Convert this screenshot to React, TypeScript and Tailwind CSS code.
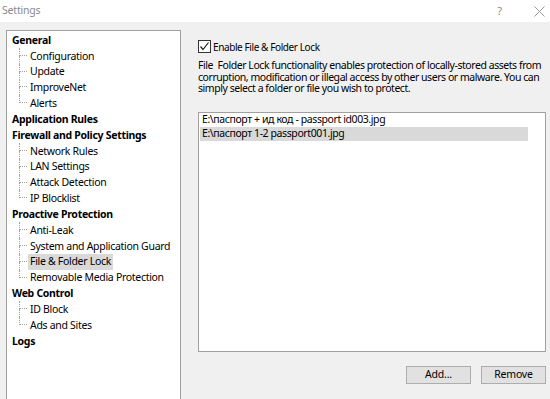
import React from "react";

type Item = { label: string; children?: string[] };

const tree: Item[] = [
  { label: "General", children: ["Configuration", "Update", "ImproveNet", "Alerts"] },
  { label: "Application Rules" },
  { label: "Firewall and Policy Settings", children: ["Network Rules", "LAN Settings", "Attack Detection", "IP Blocklist"] },
  { label: "Proactive Protection", children: ["Anti-Leak", "System and Application Guard", "File & Folder Lock", "Removable Media Protection"] },
  { label: "Web Control", children: ["ID Block", "Ads and Sites"] },
  { label: "Logs" },
];

const font = { fontFamily: '"Noto Sans", "Open Sans", sans-serif' };

function Child({ label, last, selected }: { label: string; last: boolean; selected: boolean }) {
  return (
    <div className="flex h-[15.85px] items-stretch">
      <div className="ml-[12px] flex w-[8px] shrink-0 flex-col">
        <div className="h-1/2 border-b border-l border-dotted border-[#a0a0a0]" />
        <div className={"h-1/2 " + (last ? "" : "border-l border-dotted border-[#a0a0a0]")} />
      </div>
      <div
        className={
          "ml-[1px] flex items-center whitespace-nowrap px-[2px] leading-none " + (selected ? "bg-[#d9d9d9]" : "")
        }
      >
        {label}
      </div>
    </div>
  );
}

export default function App() {
  return (
    <div className="flex h-[399px] w-[550px] flex-col overflow-hidden text-black" style={font}>
      <div className="flex h-[22px] shrink-0 items-center justify-between bg-white pl-[2px] pr-[5px] text-[#8a8a8a]">
        <span className="text-[10.5px] tracking-[-0.2px]">Settings</span>
        <div className="flex items-center gap-[32px]">
          <span className="text-[11px]">?</span>
          <svg width="11" height="11" viewBox="0 0 11 11">
            <path d="M0.5 0.5 L10.5 10.5 M10.5 0.5 L0.5 10.5" stroke="#9a9a9a" strokeWidth="1" />
          </svg>
        </div>
      </div>
      <div className="flex min-h-0 flex-1 bg-[#f0f0f0]">
        <div className="ml-[6px] mt-[8px] h-[400px] w-[175px] shrink-0 border border-[#a0a0a0] bg-white pt-[1px] text-[10.5px] tracking-[-0.3px]">
          {tree.map((g) => (
            <div key={g.label}>
              <div className="flex h-[15.85px] items-center whitespace-nowrap pl-[5px] font-bold leading-none">
                {g.label}
              </div>
              {g.children?.map((c, i) => (
                <Child key={c} label={c} last={i === g.children!.length - 1} selected={c === "File & Folder Lock"} />
              ))}
            </div>
          ))}
        </div>
        <div className="ml-[17px] flex flex-1 flex-col pr-[4px] pt-[18px]">
          <div className="flex items-center gap-[2px]">
            <div className="flex h-[13px] w-[13px] items-center justify-center border border-[#333] bg-white">
              <svg width="11" height="11" viewBox="0 0 11 11">
                <path d="M1.5 5.5 L4 8.5 L9.5 1.5" stroke="#222" strokeWidth="1.2" fill="none" />
              </svg>
            </div>
            <span className="whitespace-nowrap text-[10px] leading-none tracking-[-0.4px]">Enable File &amp; Folder Lock</span>
          </div>
          <p className="mt-[7px] w-[346px] text-[10.5px] leading-[11.5px] tracking-[-0.45px]">
            File&nbsp; Folder Lock functionality enables protection of locally-stored assets from corruption, modification
            or illegal access by other users or malware. You can simply select a folder or file you wish to protect.
          </p>
          <div className="mt-[17px] h-[240px] w-[348px] border border-[#a0a0a0] bg-white px-[1px] text-[10.5px] tracking-[-0.4px]">
            <div className="flex h-[14px] w-[328px] items-center whitespace-nowrap pl-[2px]">
              E:\паспорт + ид код - passport id003.jpg
            </div>
            <div className="flex h-[14px] w-[328px] items-center whitespace-nowrap bg-[#d9d9d9] pl-[2px]">
              E:\паспорт 1-2 passport001.jpg
            </div>
          </div>
          <div className="mt-[14px] flex w-[348px] justify-end gap-[10px]">
            <button className="h-[18px] w-[65px] border border-[#adadad] bg-[#e1e1e1] text-[10.5px] leading-none tracking-[-0.2px]">
              Add...
            </button>
            <button className="h-[18px] w-[65px] border border-[#adadad] bg-[#e1e1e1] text-[10.5px] leading-none tracking-[-0.2px]">
              Remove
            </button>
          </div>
        </div>
      </div>
    </div>
  );
}
